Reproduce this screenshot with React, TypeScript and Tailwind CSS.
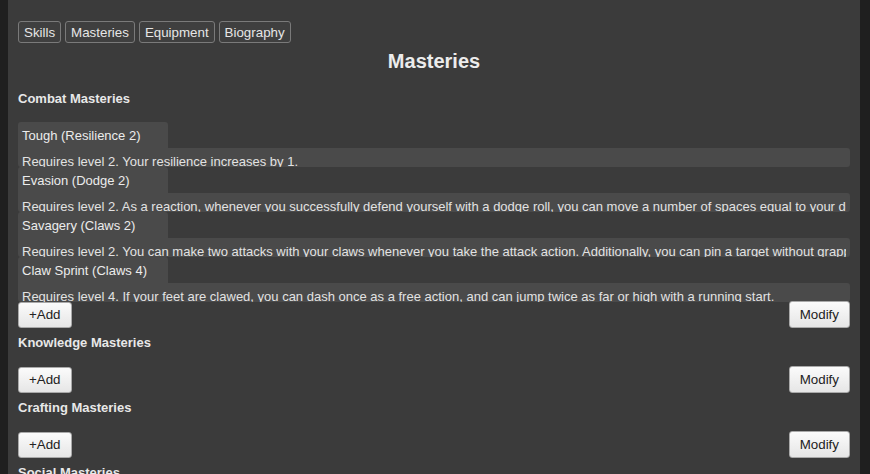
import React from "react";

const font = { fontFamily: '"Liberation Sans", Arial, Helvetica, sans-serif' };

type Mastery = { title: string; desc: string };

const combat: Mastery[] = [
  { title: "Tough (Resilience 2)", desc: "Requires level 2. Your resilience increases by 1." },
  {
    title: "Evasion (Dodge 2)",
    desc: "Requires level 2. As a reaction, whenever you successfully defend yourself with a dodge roll, you can move a number of spaces equal to your dodge skill without provoking attacks.",
  },
  {
    title: "Savagery (Claws 2)",
    desc: "Requires level 2. You can make two attacks with your claws whenever you take the attack action. Additionally, you can pin a target without grappling it first.",
  },
  {
    title: "Claw Sprint (Claws 4)",
    desc: "Requires level 4. If your feet are clawed, you can dash once as a free action, and can jump twice as far or high with a running start.",
  },
];

function Tab({ label }: { label: string }) {
  return (
    <button className="h-[22px] pt-[1px] px-[5px] border border-[#7a7a7a] rounded-[3px] bg-[#3f3f3f] text-[13.33px] leading-[19px] text-[#e6e6e6]">
      {label}
    </button>
  );
}

function LightButton({ label, tall }: { label: string; tall?: boolean }) {
  return (
    <button
      className={
        (tall ? "h-[27px] " : "h-[26px] ") +
        "px-[10px] border border-[#a9a9a9] rounded-[3px] bg-gradient-to-b from-[#fbfbfb] to-[#e6e6e6] text-[13.33px] leading-[20px] text-[#222]"
      }
    >
      {label}
    </button>
  );
}

function ButtonRow() {
  return (
    <div className="flex items-end justify-between">
      <LightButton label="+Add" />
      <LightButton label="Modify" tall />
    </div>
  );
}

function Section({ title, items }: { title: string; items: Mastery[] }) {
  return (
    <div className="flex flex-col">
      <div className="text-[13px] leading-[15px] font-bold text-[#e8e8e8] mb-[16px]">{title}</div>
      {items.map((m) => (
        <div key={m.title}>
          <div className="w-[150px] h-[26px] pt-[6px] px-[4px] bg-[#4a4a4a] rounded-t-[3px] text-[13px] leading-[15px] text-[#ececec] whitespace-nowrap overflow-hidden">
            {m.title}
          </div>
          <div className="h-[19px] pt-[6px] px-[4px] bg-[#4a4a4a] rounded-b-[3px] rounded-tr-[3px] overflow-hidden">
            <div className="overflow-hidden whitespace-nowrap text-[13px] leading-[15px] text-[#e2e2e2]">{m.desc}</div>
          </div>
        </div>
      ))}
      <div className={items.length > 0 ? "-mt-px" : ""}>
        <ButtonRow />
      </div>
    </div>
  );
}

export default function App() {
  return (
    <div style={font} className="w-[870px] h-[474px] overflow-hidden bg-[#1f1f1f] flex">
      <div className="ml-[8px] w-[852px] h-full bg-[#3b3b3b] px-[10px] flex flex-col">
        <div className="h-[1px] bg-[#f2f2f2]" />
        <div className="mt-[21px] flex gap-[4px]">
          <Tab label="Skills" />
          <Tab label="Masteries" />
          <Tab label="Equipment" />
          <Tab label="Biography" />
        </div>
        <div className="mt-[7px] text-center text-[20px] leading-[23px] font-bold text-[#ececec]">Masteries</div>
        <div className="mt-[18px] flex flex-col gap-[7px]">
          <Section title="Combat Masteries" items={combat} />
          <Section title="Knowledge Masteries" items={[]} />
          <Section title="Crafting Masteries" items={[]} />
          <Section title="Social Masteries" items={[]} />
        </div>
      </div>
    </div>
  );
}
